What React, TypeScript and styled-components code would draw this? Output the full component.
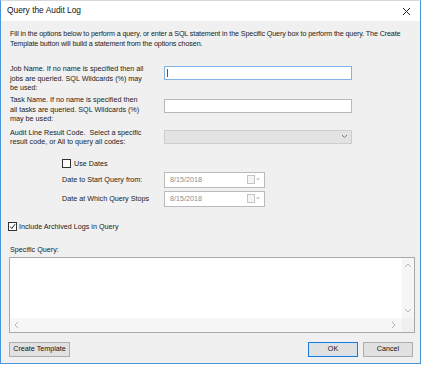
import React from 'react';
import styled, { createGlobalStyle } from 'styled-components';

const Global = createGlobalStyle`
  html, body { margin: 0; padding: 0; background: #ffffff; }
  body { font-family: "Liberation Sans", Arial, sans-serif; }
`;

const Window = styled.div`
  width: 421px;
  height: 364px;
  box-sizing: border-box;
  border: 1px solid #4a94da;
  border-top-color: #d9d9d9;
  background: #f0f0f0;
  display: flex;
  flex-direction: column;
  color: #222;
  font-size: 7.2px;
  line-height: 9.6px;
`;

const TitleBar = styled.div`
  height: 20px;
  background: #ffffff;
  display: flex;
  align-items: center;
  justify-content: space-between;
  padding: 0 9px 0 6px;
  font-size: 8.4px;
  color: #111;
`;

const Body = styled.div`
  flex: 1;
  padding: 8px 7px 0 8px;
  display: flex;
  flex-direction: column;
`;

const Intro = styled.p`
  margin: 0 0 0 1px;
  width: 406px;
  letter-spacing: -0.13px;
`;

const FieldRow = styled.div<{ $top: number }>`
  display: flex;
  align-items: flex-start;
  margin-top: ${(p) => p.$top}px;
`;

const Label = styled.div`
  width: 136px;
  margin-left: 1px;
  margin-right: 18px;
`;

const TextBox = styled.div<{ $focused?: boolean; $offset: number }>`
  width: 188px;
  height: 14px;
  box-sizing: border-box;
  margin-top: ${(p) => p.$offset}px;
  background: #fff;
  border: 1px solid ${(p) => (p.$focused ? '#7fb3e6' : '#b9b9b9')};
  position: relative;
`;

const Caret = styled.span`
  position: absolute;
  left: 2px;
  top: 2px;
  width: 1px;
  height: 8px;
  background: #555;
`;

const Select = styled.div`
  width: 188px;
  height: 14px;
  box-sizing: border-box;
  margin-top: 2px;
  background: #e3e3e3;
  border: 1px solid #cdcdcd;
  display: flex;
  align-items: center;
  justify-content: flex-end;
  padding-right: 3px;
`;

const CheckRow = styled.label<{ $indent: number; $top: number }>`
  display: flex;
  align-items: center;
  gap: 3px;
  margin-left: ${(p) => p.$indent}px;
  margin-top: ${(p) => p.$top}px;
`;

const Box = styled.span`
  width: 9px;
  height: 9px;
  box-sizing: border-box;
  border: 1px solid #333;
  background: #fff;
  display: inline-flex;
  align-items: center;
  justify-content: center;
`;

const DateRow = styled.div<{ $top: number }>`
  display: flex;
  align-items: center;
  margin-top: ${(p) => p.$top}px;
  margin-left: 53px;
`;

const DateLabel = styled.div`
  width: 102px;
`;

const DateBox = styled.div`
  width: 101px;
  height: 16px;
  box-sizing: border-box;
  background: #fff;
  border: 1px solid #bababa;
  display: flex;
  align-items: center;
  justify-content: space-between;
  padding: 0 3px 0 5px;
  color: #8d8d8d;
`;

const QueryLabel = styled.div`
  margin: 14px 0 0 1px;
`;

const QueryArea = styled.div`
  margin-top: 2px;
  width: 406px;
  height: 76px;
  box-sizing: border-box;
  border: 1px solid #a8a8a8;
  background: #fff;
  display: grid;
  grid-template-columns: 1fr 12px;
  grid-template-rows: 1fr 14px;
`;

const VScroll = styled.div`
  background: #f6f6f6;
  display: flex;
  flex-direction: column;
  justify-content: space-between;
  align-items: center;
  padding: 4px 0 3px;
`;

const HScroll = styled.div`
  background: #f6f6f6;
  display: flex;
  align-items: center;
  justify-content: space-between;
  padding: 0 4px 0 3px;
`;

const Corner = styled.div`
  background: #f0f0f0;
`;

const Buttons = styled.div`
  display: flex;
  align-items: center;
  margin-top: 9px;
  gap: 5px;
`;

const Button = styled.button<{ $width: number; $primary?: boolean }>`
  width: ${(p) => p.$width}px;
  height: 15px;
  box-sizing: border-box;
  padding: 0;
  font: inherit;
  color: #111;
  background: #e1e1e1;
  border: 1px solid ${(p) => (p.$primary ? '#1f7ad6' : '#adadad')};
  box-shadow: ${(p) => (p.$primary ? 'inset 0 0 0 1px #cfe3f7' : 'none')};
`;

const Spacer = styled.div`
  flex: 1;
`;

const Chevron = ({ dir }: { dir: 'up' | 'down' | 'left' | 'right' }) => {
  const pts = {
    up: '1,5 4,2 7,5',
    down: '1,2 4,5 7,2',
    left: '5,1 2,4 5,7',
    right: '2,1 5,4 2,7',
  }[dir];
  return (
    <svg width="8" height="8" viewBox="0 0 8 8">
      <polyline points={pts} fill="none" stroke="#b5b5b5" strokeWidth="1" />
    </svg>
  );
};

const Calendar = () => (
  <svg width="14" height="9" viewBox="0 0 14 9">
    <rect x="0.5" y="0.5" width="7" height="8" fill="#f4f4f4" stroke="#c4c4c4" />
    <polyline points="9.5,3.5 11,5 12.5,3.5" fill="#bdbdbd" stroke="#bdbdbd" strokeWidth="0.8" />
  </svg>
);

const App = () => {
  return (
    <>
      <Global />
      <Window>
        <TitleBar>
          <span>Query the Audit Log</span>
          <svg width="9" height="9" viewBox="0 0 9 9">
            <path d="M1 1 L8 8 M8 1 L1 8" stroke="#222" strokeWidth="1" />
          </svg>
        </TitleBar>
        <Body>
          <Intro>
            Fill in the options below to perform a query, or enter a SQL statement in the Specific Query box to perform the query. The Create Template button will build a statement from the options chosen.
          </Intro>

          <FieldRow $top={16}>
            <Label>
              Job Name. If no name is specified then all jobs are queried. SQL Wildcards (%) may
              <br />
              be used:
            </Label>
            <TextBox $focused $offset={2}>
              <Caret />
            </TextBox>
          </FieldRow>

          <FieldRow $top={2}>
            <Label>Task Name. If no name is specified then all tasks are queried. SQL Wildcards (%) may be used:</Label>
            <TextBox $offset={4} />
          </FieldRow>

          <FieldRow $top={4}>
            <Label>Audit Line Result Code.&nbsp; Select a specific result code, or All to query all codes:</Label>
            <Select>
              <svg width="7" height="5" viewBox="0 0 7 5">
                <polyline points="1,1 3.5,3.5 6,1" fill="none" stroke="#777" strokeWidth="1" />
              </svg>
            </Select>
          </FieldRow>

          <CheckRow $indent={53} $top={12}>
            <Box />
            <span>Use Dates</span>
          </CheckRow>

          <DateRow $top={3}>
            <DateLabel>Date to Start Query from:</DateLabel>
            <DateBox>
              <span>8/15/2018</span>
              <Calendar />
            </DateBox>
          </DateRow>

          <DateRow $top={3}>
            <DateLabel>Date at Which Query Stops</DateLabel>
            <DateBox>
              <span>8/15/2018</span>
              <Calendar />
            </DateBox>
          </DateRow>

          <CheckRow $indent={-1} $top={15}>
            <Box>
              <svg width="7" height="7" viewBox="0 0 7 7">
                <polyline points="1,3.5 2.8,5.5 6,1.2" fill="none" stroke="#222" strokeWidth="1" />
              </svg>
            </Box>
            <span style={{ marginLeft: -1 }}>Include Archived Logs in Query</span>
          </CheckRow>

          <QueryLabel>Specific Query:</QueryLabel>
          <QueryArea>
            <div />
            <VScroll>
              <Chevron dir="up" />
              <Chevron dir="down" />
            </VScroll>
            <HScroll>
              <Chevron dir="left" />
              <Chevron dir="right" />
            </HScroll>
            <Corner />
          </QueryArea>

          <Buttons>
            <Button $width={61}>Create Template</Button>
            <Spacer />
            <Button $width={50} $primary>OK</Button>
            <Button $width={50}>Cancel</Button>
          </Buttons>
        </Body>
      </Window>
    </>
  );
};

export default App;
